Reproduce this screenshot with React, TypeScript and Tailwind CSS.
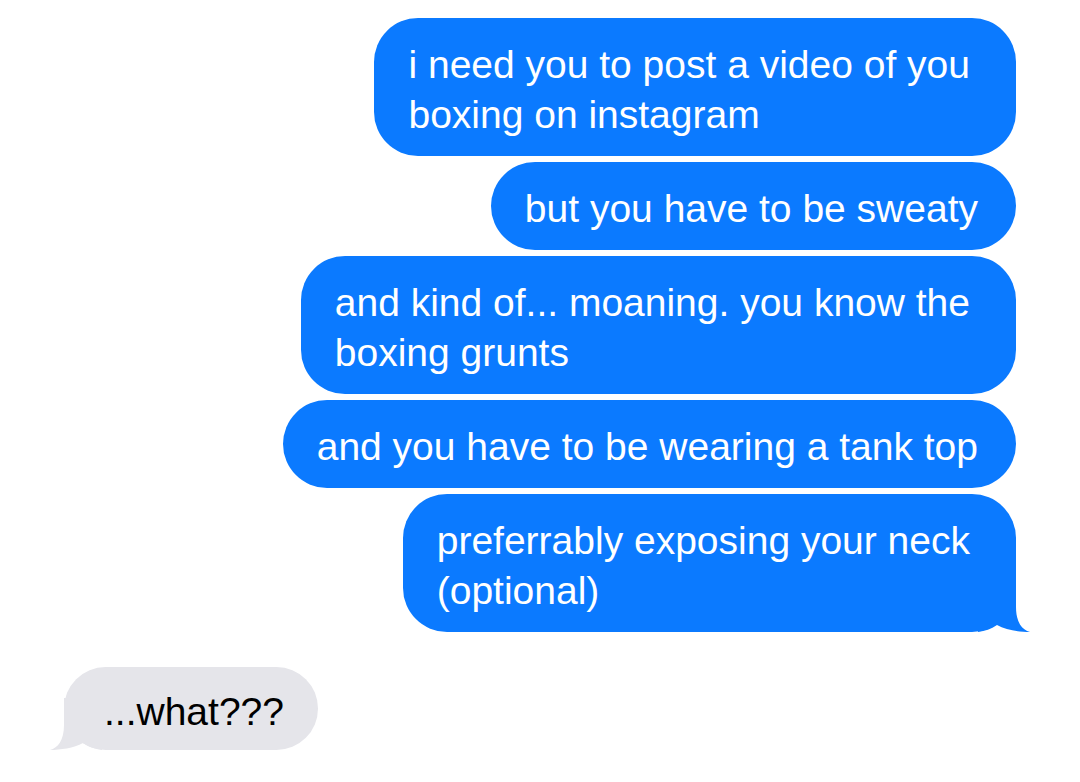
const blue = "bg-[#0b7aff] text-white";

function Tail({ side }: { side: "right" | "left" }) {
   const isRight = side === "right";
   return (
      <svg
         width="72"
         height="52"
         viewBox="0 0 72 52"
         className={isRight ? "absolute -right-[14px] bottom-0" : "absolute -left-[14px] bottom-0 -scale-x-100"}
      >
         <path
            d="M20 0 L58 0 L58 27 C58 42 64 50 72 52 C62 52 48 50 39 45 C33 49 27 51 20 52 Z"
            fill={isRight ? "#0b7aff" : "#e5e5ea"}
         />
      </svg>
   );
}

function Sent({ lines, tail }: { lines: string[]; tail?: boolean }) {
   // wrapped bubbles keep a bit more room on the right
   const pr = lines.length > 1 ? "pr-[46px]" : "pr-[38px]";
   return (
      <div className={`relative self-end rounded-[44px] pl-[34px] ${pr} pt-[22px] pb-[16px] ${blue}`}>
         {lines.map((l, i) => (
            <p key={i} className="whitespace-nowrap">{l}</p>
         ))}
         {tail && <Tail side="right" />}
      </div>
   );
}

export default function App() {
   return (
      <div
         className="w-[1080px] h-[782px] bg-white flex flex-col px-[64px] pt-[18px] text-[39px] leading-[50px]"
         style={{ fontFamily: '"Liberation Sans", Arial, sans-serif' }}
      >
         <div className="flex flex-col gap-[6px]">
            <Sent lines={["i need you to post a video of you", "boxing on instagram"]} />
            <Sent lines={["but you have to be sweaty"]} />
            <Sent lines={["and kind of... moaning. you know the", "boxing grunts"]} />
            <Sent lines={["and you have to be wearing a tank top"]} />
            <Sent lines={["preferrably exposing your neck", "(optional)"]} tail />
         </div>
         <div className="relative self-start mt-[35px] rounded-[44px] bg-[#e5e5ea] text-black pl-[40px] pr-[34px] pt-[20px] pb-[13px]">
            <p className="whitespace-nowrap">...what???</p>
            <Tail side="left" />
         </div>
      </div>
   );
}
